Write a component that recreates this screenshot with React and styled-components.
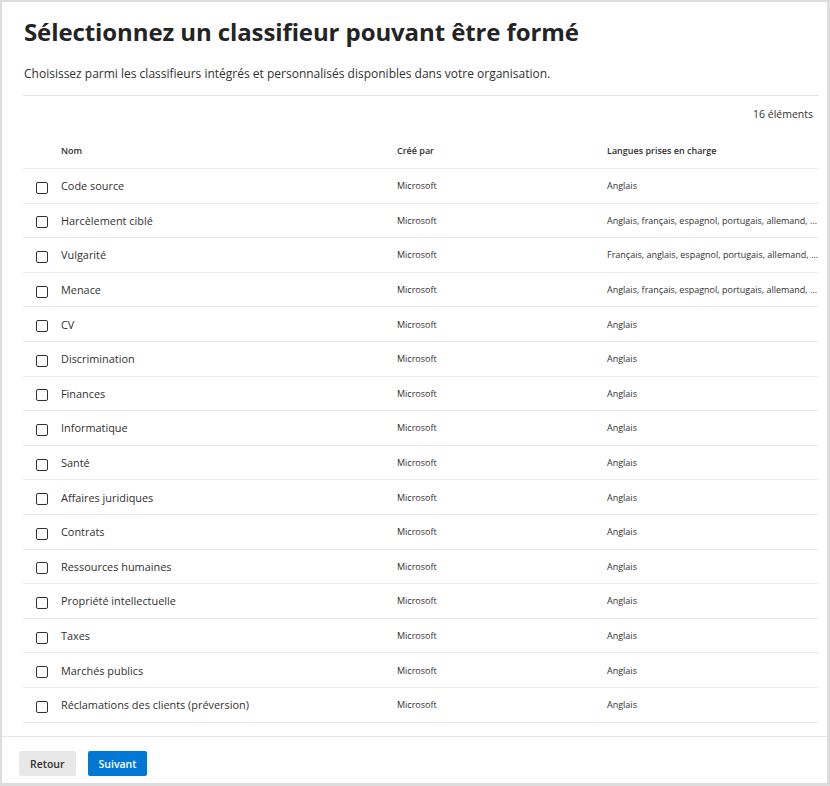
import React from "react";
import styled, { createGlobalStyle } from "styled-components";

const Global = createGlobalStyle`
  html, body { margin: 0; padding: 0; background: #ffffff; }
  body { font-family: "Open Sans", "Noto Sans", sans-serif; color: #323130; }
  * { box-sizing: border-box; }
`;

const Panel = styled.div`
  width: 830px;
  height: 786px;
  border-style: solid;
  border-color: #dddddd;
  border-width: 2px 3px 3px 2px;
  display: flex;
  flex-direction: column;
  background: #fff;
`;

const Body = styled.div`
  flex: 1;
  padding: 0 8px 0 21px;
  display: flex;
  flex-direction: column;
`;

const Title = styled.h1`
  margin: 0;
  padding-top: 14px;
  height: 52px;
  font-size: 24px;
  font-weight: 700;
  line-height: 32px;
  padding-left: 1px;
  color: #242424;
  letter-spacing: -0.1px;
`;

const Subtitle = styled.p`
  margin: 0;
  padding-left: 1px;
  height: 42px;
  font-size: 12px;
  line-height: 40px;
  border-bottom: 1px solid #e6e6e6;
  color: #323130;
`;

const CountBar = styled.div`
  height: 36px;
  display: flex;
  align-items: center;
  justify-content: flex-end;
  padding-right: 6px;
  font-size: 10.5px;
  color: #323130;
`;

const Grid = styled.div`
  display: grid;
  grid-template-columns: 38px 336px 210px 1fr;
`;

const HeaderRow = styled(Grid)`
  height: 37px;
  align-items: center;
  border-bottom: 1px solid #edebe9;
  font-size: 9px;
  font-weight: 600;
  color: #323130;
`;

const Row = styled(Grid)`
  height: 34.6px;
  align-items: center;
  border-bottom: 1px solid #edebe9;
`;

const CheckCell = styled.div`
  display: flex;
  justify-content: flex-start;
  padding-left: 13px;
  padding-top: 4px;
`;

const Checkbox = styled.span`
  width: 12px;
  height: 12px;
  border: 1px solid #323130;
  border-radius: 2px;
  display: block;
`;

const NameCell = styled.div`
  font-size: 10.9px;
  color: #323130;
  white-space: nowrap;
`;

const SmallCell = styled.div`
  font-size: 9px;
  color: #323130;
  white-space: nowrap;
`;

const Footer = styled.div`
  height: 47px;
  border-top: 1px solid #e6e6e6;
  display: flex;
  align-items: flex-start;
  gap: 12px;
  padding: 14px 0 0 17px;
`;

const Button = styled.button`
  height: 25px;
  padding: 0 ${(p) => (p.$primary ? "11px" : "11px")};
  border: none;
  border-radius: 2px;
  font-family: inherit;
  font-size: 10.5px;
  font-weight: 600;
  background: ${(p) => (p.$primary ? "#0078d4" : "#e8e8e8")};
  color: ${(p) => (p.$primary ? "#ffffff" : "#323130")};
`;

const rows = [
  ["Code source", "Anglais"],
  ["Harcèlement ciblé", "Anglais, français, espagnol, portugais, allemand, ..."],
  ["Vulgarité", "Français, anglais, espagnol, portugais, allemand, ..."],
  ["Menace", "Anglais, français, espagnol, portugais, allemand, ..."],
  ["CV", "Anglais"],
  ["Discrimination", "Anglais"],
  ["Finances", "Anglais"],
  ["Informatique", "Anglais"],
  ["Santé", "Anglais"],
  ["Affaires juridiques", "Anglais"],
  ["Contrats", "Anglais"],
  ["Ressources humaines", "Anglais"],
  ["Propriété intellectuelle", "Anglais"],
  ["Taxes", "Anglais"],
  ["Marchés publics", "Anglais"],
  ["Réclamations des clients (préversion)", "Anglais"],
];

export default function App() {
  return (
    <>
      <Global />
      <Panel>
        <Body>
          <Title>Sélectionnez un classifieur pouvant être formé</Title>
          <Subtitle>
            Choisissez parmi les classifieurs intégrés et personnalisés disponibles dans votre organisation.
          </Subtitle>
          <CountBar>16 éléments</CountBar>
          <HeaderRow>
            <span />
            <span>Nom</span>
            <span>Créé par</span>
            <span>Langues prises en charge</span>
          </HeaderRow>
          {rows.map(([name, langs]) => (
            <Row key={name}>
              <CheckCell>
                <Checkbox role="checkbox" aria-checked="false" />
              </CheckCell>
              <NameCell>{name}</NameCell>
              <SmallCell>Microsoft</SmallCell>
              <SmallCell>{langs}</SmallCell>
            </Row>
          ))}
        </Body>
        <Footer>
          <Button>Retour</Button>
          <Button $primary>Suivant</Button>
        </Footer>
      </Panel>
    </>
  );
}
